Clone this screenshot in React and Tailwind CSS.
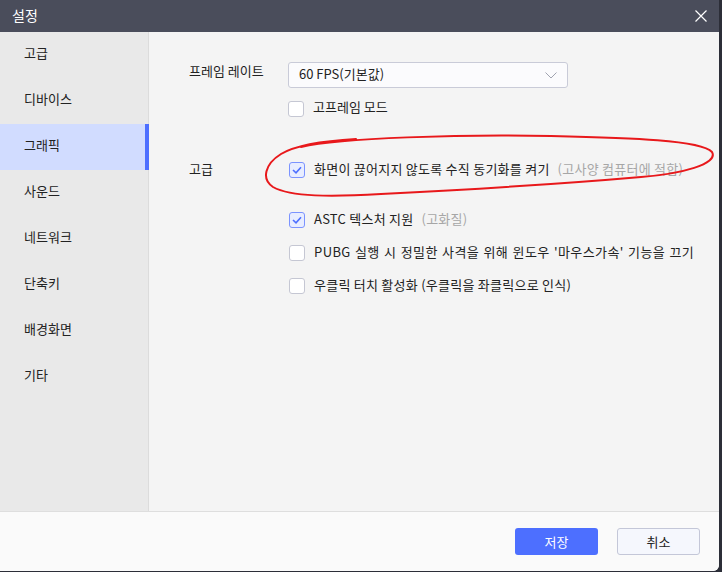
import React from "react";

const font = { fontFamily: '"Noto Sans CJK KR", "Noto Sans", sans-serif' };

const navItems = ["고급", "디바이스", "그래픽", "사운드", "네트워크", "단축키", "배경화면", "기타"];

function Check({ checked }) {
  return checked ? (
    <div className="w-[16px] h-[16px] rounded-[3px] border border-[#7b93ff] bg-[#e8edff] flex items-center justify-center shrink-0">
      <svg width="10" height="8" viewBox="0 0 10 8">
        <path d="M1 4 L4 6.8 L9 1.2" fill="none" stroke="#4d6fff" strokeWidth="1.6" />
      </svg>
    </div>
  ) : (
    <div className="w-[16px] h-[16px] rounded-[3px] border border-[#c5c7d3] bg-white shrink-0" />
  );
}

function Row({ checked, children, sub, wide }) {
  return (
    <div className="flex items-center h-[33px]">
      <Check checked={checked} />
      <span
        className={
          "ml-[9px] text-[13px] text-[#222] relative -top-[1px] " +
          (wide ? "tracking-[0.4px] [word-spacing:1px]" : "tracking-[0.25px]")
        }
      >
        {children}
      </span>
      {sub && (
        <span className="ml-[8px] text-[13px] text-[#a6a6a6] relative -top-[1px] tracking-[0.25px]">{sub}</span>
      )}
    </div>
  );
}

export default function App() {
  return (
    <div className="w-[722px] h-[572px] bg-[#2c2e38] overflow-hidden" style={font}>
      <div className="w-[719px] h-[571px] flex flex-col rounded-br-[6px] overflow-hidden bg-[#fafafa]">
        <div className="h-[32px] bg-[#4a4d5b] flex items-center justify-between pl-[12px] pr-[12px] shrink-0">
          <span className="text-white text-[14px] relative -top-[1px]">설정</span>
          <svg width="12" height="12" viewBox="0 0 12 12">
            <path d="M0.5 0.5 L11.5 11.5 M11.5 0.5 L0.5 11.5" stroke="#fff" strokeWidth="1.2" />
          </svg>
        </div>
        <div className="flex h-[479px] shrink-0">
          <div className="w-[149px] bg-[#e9e9e9] border-r border-[#dcdcdc] shrink-0">
            {navItems.map((t, i) => (
              <div
                key={t}
                className={
                  "h-[46px] flex items-center pl-[24px] pb-[4px] text-[13px] text-[#222] " +
                  (i === 2 ? "bg-[#d1dcff] border-r-[4px] border-[#4d6fff] -mr-[1px]" : "")
                }
              >
                {t}
              </div>
            ))}
          </div>
          <div className="flex-1 bg-[#f4f4f4] relative pl-[40px] pt-[30px]">
            <div className="flex">
              <div className="w-[99px] text-[13px] text-[#222] -mt-[1px]">프레임 레이트</div>
              <div>
                <div className="w-[280px] h-[26px] bg-[#fbfbfd] border border-[#c9cbd8] rounded-[3px] flex items-center justify-between pl-[10px] pr-[10px]">
                  <span className="text-[13px] text-[#222] relative -top-[1px]">60 FPS(기본값)</span>
                  <svg width="12" height="7" viewBox="0 0 12 7">
                    <path d="M0.5 0.5 L6 6 L11.5 0.5" fill="none" stroke="#a0a3b0" strokeWidth="1" />
                  </svg>
                </div>
                <div className="flex items-center mt-[11px]">
                  <Check />
                  <span className="ml-[9px] text-[13px] text-[#222] relative -top-[2px]">고프레임 모드</span>
                </div>
              </div>
            </div>
            <div className="flex mt-[35px]">
              <div className="w-[100px] text-[13px] text-[#222] h-[33px] flex items-center relative -top-[1px]">고급</div>
              <div className="flex flex-col">
                <Row checked sub="(고사양 컴퓨터에 적합)">화면이 끊어지지 않도록 수직 동기화를 켜기</Row>
                <div className="h-[17px]" />
                <Row checked sub="(고화질)">ASTC 텍스처 지원</Row>
                <Row wide>PUBG 실행 시 정밀한 사격을 위해 윈도우 '마우스가속' 기능을 끄기</Row>
                <Row>우클릭 터치 활성화 (우클릭을 좌클릭으로 인식)</Row>
              </div>
            </div>
            <svg
              className="absolute left-[112px] top-[102px] pointer-events-none"
              width="460"
              height="68"
              viewBox="0 0 460 68"
            >
              <path
                d="M40 13 C 80 4, 200 0, 290 2 C 370 4, 440 6, 451 18 C 458 30, 420 40, 380 43 C 300 50, 200 56, 120 60 C 70 63, 30 63, 12 53 C 0 45, 4 30, 20 20 C 35 11, 60 7, 95 5"
                fill="none"
                stroke="#e8181b"
                strokeWidth="2"
                strokeLinecap="round"
              />
            </svg>
          </div>
        </div>
        <div className="flex-1 border-t border-[#dedede] bg-[#fafafa] flex items-center justify-end pr-[19px] gap-[19px]">
          <button className="w-[83px] h-[27px] rounded-[3px] bg-[#4d6fff] text-white text-[13px]">저장</button>
          <button className="w-[83px] h-[27px] rounded-[3px] border border-[#c4c7d8] bg-[#f5f7fd] text-[#222] text-[13px]">취소</button>
        </div>
      </div>
    </div>
  );
}
